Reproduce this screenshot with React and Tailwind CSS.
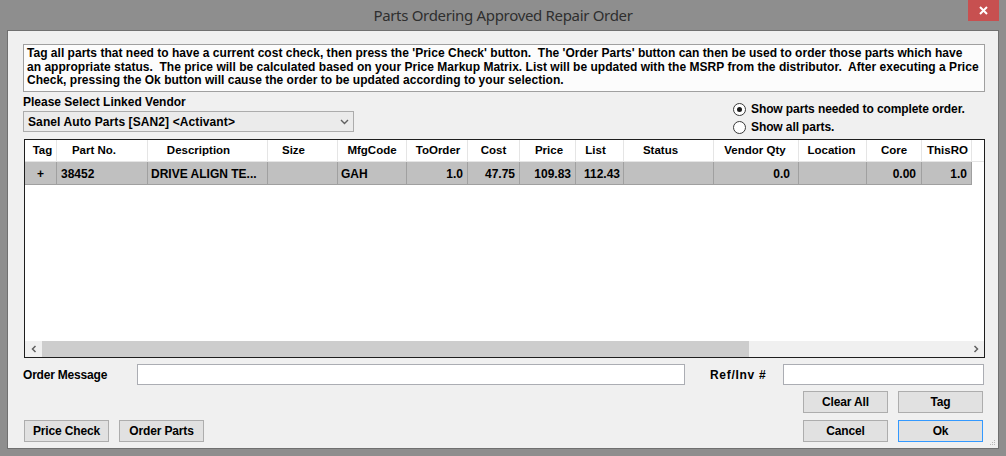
import React from "react";

const cols = [
  { w: "w-[32px]", h: "Tag", hc: "justify-center pl-[4px]", v: "+", vc: "justify-center" },
  { w: "w-[91px]", h: "Part No.", hc: "justify-center pr-[16px]", v: "38452", vc: "justify-start pl-[4px]" },
  { w: "w-[120px]", h: "Description", hc: "justify-center pr-[18px]", v: "DRIVE ALIGN TE...", vc: "justify-start pl-[3px]" },
  { w: "w-[70px]", h: "Size", hc: "justify-center pr-[18px]", v: "", vc: "" },
  { w: "w-[69px]", h: "MfgCode", hc: "justify-center", v: "GAH", vc: "justify-start pl-[3px]" },
  { w: "w-[61px]", h: "ToOrder", hc: "justify-center pl-[2px]", v: "1.0", vc: "justify-end pr-[4px]" },
  { w: "w-[52px]", h: "Cost", hc: "justify-center", v: "47.75", vc: "justify-end pr-[4px]" },
  { w: "w-[56px]", h: "Price", hc: "justify-center pl-[3px]", v: "109.83", vc: "justify-end pr-[4px]" },
  { w: "w-[48px]", h: "List", hc: "justify-center pr-[8px]", v: "112.43", vc: "justify-end pr-[3px]" },
  { w: "w-[90px]", h: "Status", hc: "justify-center pr-[16px]", v: "", vc: "" },
  { w: "w-[85px]", h: "Vendor Qty", hc: "justify-center pr-[2px]", v: "0.0", vc: "justify-end pr-[8px]" },
  { w: "w-[68px]", h: "Location", hc: "justify-center pr-[2px]", v: "", vc: "" },
  { w: "w-[55px]", h: "Core", hc: "justify-center", v: "0.00", vc: "justify-end pr-[5px]" },
  { w: "w-[50px]", h: "ThisRO", hc: "justify-center pl-[2px]", v: "1.0", vc: "justify-end pr-[4px]" },
];

function Button({ children, className = "" }) {
  return (
    <div
      className={
        "h-[22px] w-[85px] flex items-center justify-center bg-[#e1e1e1] border text-[12px] font-bold tracking-[-0.15px] text-black " +
        className
      }
    >
      {children}
    </div>
  );
}

function Radio({ checked, label }) {
  return (
    <div className="h-[18px] flex items-center">
      <div className="w-[13px] h-[13px] rounded-full border border-[#3a3a3a] bg-white flex items-center justify-center">
        {checked && <div className="w-[5px] h-[5px] rounded-full bg-[#1a1a1a]" />}
      </div>
      <span className="ml-[5px] text-[12px] font-bold tracking-[-0.1px] text-black leading-[14px]">{label}</span>
    </div>
  );
}

export default function App() {
  return (
    <div className="w-[1006px] h-[456px] bg-[#8e8e8e] flex flex-col px-[7px] pb-[7px] font-['Liberation_Sans',Arial,sans-serif] text-black select-none">
      {/* Title bar */}
      <div className="h-[30px] -mx-[7px] grid grid-cols-[1fr_auto_1fr]">
        <div />
        <div className="pt-[6px] text-[15px] leading-[18px] text-[#2f2f2f] font-['Noto_Sans',sans-serif] tracking-[-0.32px]">
          Parts Ordering Approved Repair Order
        </div>
        <div className="flex justify-end pr-[7px]">
          <div className="w-[31px] h-[21px] bg-[#c75050] flex items-center justify-center">
            <svg width="9" height="9" viewBox="0 0 9 9">
              <path d="M1 1 L8 8 M8 1 L1 8" stroke="white" strokeWidth="2" />
            </svg>
          </div>
        </div>
      </div>

      {/* Client area */}
      <div className="flex-1 border border-[#707070] bg-[#f0f0f0] flex flex-col pl-[15px] relative">
        {/* Info box */}
        <div className="mt-[13px] w-[962px] h-[48px] border border-[#a0a0a0] bg-[#fcfcfc] px-[3px] pt-[2px] text-[12px] font-bold tracking-[0.02px] leading-[13.5px] whitespace-pre">
          {"Tag all parts that need to have a current cost check, then press the 'Price Check' button.  The 'Order Parts' button can then be used to order those parts which have"}
          <br />
          {"an appropriate status.  The price will be calculated based on your Price Markup Matrix. List will be updated with the MSRP from the distributor.  After executing a Price"}
          <br />
          {"Check, pressing the Ok button will cause the order to be updated according to your selection."}
        </div>

        {/* Vendor row */}
        <div className="h-[47px] flex">
          <div className="w-[331px] flex flex-col">
            <div className="pt-[3px] text-[12px] font-bold leading-[14px]">Please Select Linked Vendor</div>
            <div className="mt-[2px] h-[21px] border border-[#acacac] bg-[#ebebeb] flex items-center pl-[4px] pr-[4px]">
              <span className="flex-1 text-[12px] font-bold tracking-[0.1px]">Sanel Auto Parts [SAN2] &lt;Activant&gt;</span>
              <svg width="9" height="6" viewBox="0 0 9 6">
                <path d="M1 1 L4.5 4.5 L8 1" stroke="#606060" strokeWidth="1.4" fill="none" />
              </svg>
            </div>
          </div>
          <div className="ml-[379px] pt-[8px] flex flex-col">
            <Radio checked label="Show parts needed to complete order." />
            <Radio label="Show all parts." />
          </div>
        </div>

        {/* Grid */}
        <div className="ml-[1px] w-[961px] h-[219px] border border-[#1e1e1e] bg-white flex flex-col">
          <div className="h-[22px] flex border-b border-[#e5e5e5] bg-white">
            {cols.map((c) => (
              <div key={c.h} className={c.w + " h-full pt-[1px] border-r border-[#e5e5e5] flex items-center text-[11.5px] font-bold whitespace-nowrap " + c.hc}>
                {c.h}
              </div>
            ))}
          </div>
          <div className="h-[23px] flex">
            <div className="flex border-b border-[#a0a0a0] bg-[#c0c0c0]">
              {cols.map((c) => (
                <div key={c.h} className={c.w + " h-[22px] pt-[1px] border-r border-[#a0a0a0] flex items-center text-[12px] font-bold whitespace-nowrap overflow-hidden " + c.vc}>
                  {c.v}
                </div>
              ))}
            </div>
          </div>
          <div className="flex-1" />
          <div className="h-[16px] flex bg-[#f0f0f0]">
            <div className="w-[17px] flex items-center justify-center">
              <svg width="6" height="8" viewBox="0 0 6 8">
                <path d="M4.5 1 L1.5 4 L4.5 7" stroke="#606060" strokeWidth="1.5" fill="none" />
              </svg>
            </div>
            <div className="w-[707px] bg-[#cdcdcd]" />
            <div className="flex-1" />
            <div className="w-[17px] flex items-center justify-center">
              <svg width="6" height="8" viewBox="0 0 6 8">
                <path d="M1.5 1 L4.5 4 L1.5 7" stroke="#606060" strokeWidth="1.5" fill="none" />
              </svg>
            </div>
          </div>
        </div>

        {/* Order message row */}
        <div className="mt-[6px] h-[21px] flex items-center">
          <div className="w-[114px] text-[12px] font-bold tracking-[-0.2px]">Order Message</div>
          <div className="w-[548px] h-[21px] border border-[#abadb3] bg-white" />
          <div className="ml-[25px] w-[73px] text-[12px] font-bold tracking-[0.7px]">Ref/Inv #</div>
          <div className="w-[201px] h-[21px] border border-[#abadb3] bg-white" />
        </div>

        {/* Buttons row 1 */}
        <div className="mt-[6px] h-[22px] flex">
          <div className="ml-[780px] flex gap-[10px]">
            <Button className="border-[#adadad]">Clear All</Button>
            <Button className="border-[#adadad]">Tag</Button>
          </div>
        </div>

        {/* Buttons row 2 */}
        <div className="mt-[7px] h-[22px] flex">
          <div className="ml-[1px] flex gap-[10px]">
            <Button className="border-[#adadad]">Price Check</Button>
            <Button className="border-[#adadad]">Order Parts</Button>
          </div>
          <div className="ml-[599px] flex gap-[10px]">
            <Button className="border-[#adadad]">Cancel</Button>
            <Button className="border-[#3399ff]">Ok</Button>
          </div>
        </div>

        {/* resize grip */}
        <svg className="absolute right-[2px] bottom-[2px]" width="7" height="7" viewBox="0 0 7 7">
          <rect x="5" y="1" width="1" height="1" fill="#b8b8b8" />
          <rect x="3" y="3" width="1" height="1" fill="#b8b8b8" />
          <rect x="5" y="3" width="1" height="1" fill="#b8b8b8" />
          <rect x="1" y="5" width="1" height="1" fill="#b8b8b8" />
          <rect x="3" y="5" width="1" height="1" fill="#b8b8b8" />
          <rect x="5" y="5" width="1" height="1" fill="#b8b8b8" />
        </svg>
      </div>
    </div>
  );
}
